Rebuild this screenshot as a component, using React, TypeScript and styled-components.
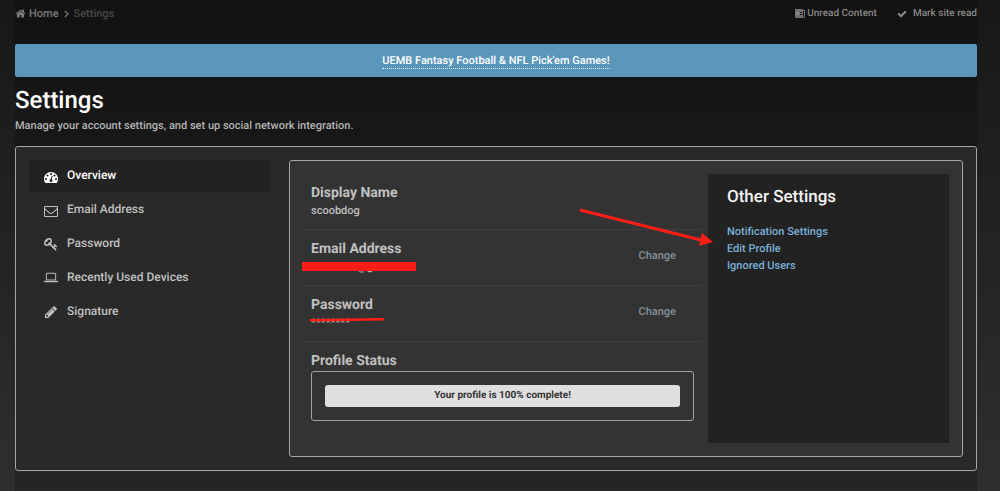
import React from "react";
import styled, { createGlobalStyle } from "styled-components";

const Global = createGlobalStyle`
  *, *::before, *::after { box-sizing: border-box; }
  html { min-height: 100%; }
  body {
    margin: 0;
    min-height: 100vh;
    background: linear-gradient(#181818, #2e2e2e);
    color: #c0c0c0;
    font: 500 11px/18px Roboto, "Liberation Sans", sans-serif;
    text-rendering: geometricPrecision;
  }
  a { color: inherit; text-decoration: none; }
  h1, h2, h3, p, ul, ol { margin: 0; padding: 0; font-weight: 500; list-style: none; }
`;

const Page = styled.div`
  min-height: 100vh;
  margin: 0 23px 0 15px;
  background: linear-gradient(#121212, #252525);
`;

const TopBar = styled.div`
  display: flex;
  justify-content: space-between;
  align-items: center;
  height: 44px;
  padding-bottom: 17px;
`;

const Crumbs = styled.ol`
  display: flex;
  align-items: center;
  gap: 5px;
  color: #7c7c7c;
`;

const Crumb = styled.li<{ $current?: boolean }>`
  display: flex;
  align-items: center;
  gap: 3px;
  color: ${(p) => (p.$current ? "#484848" : "#7c7c7c")};
`;

const TopLinks = styled.nav`
  display: flex;
  gap: 20px;
  color: #888;
  font-size: 10px;
`;

const TopLink = styled.a<{ $gap: number }>`
  display: flex;
  align-items: center;
  gap: ${(p) => p.$gap}px;
`;

const Svg = styled.svg<{ $w: number; $h: number }>`
  flex: none;
  width: ${(p) => p.$w}px;
  height: ${(p) => p.$h}px;
  fill: currentColor;
`;

const Banner = styled.div`
  display: flex;
  justify-content: center;
  align-items: center;
  height: 33px;
  border-radius: 2px;
  background: #5b96bb;
`;

const BannerLink = styled.a`
  border-bottom: 1px dotted #e4eff5;
  color: #fff;
  line-height: 15px;
`;

const Title = styled.h1`
  padding-top: 8px;
  color: #fff;
  font-size: 24px;
  line-height: 30px;
`;

const Intro = styled.p`
  padding: 2px 0 11px;
  color: #b4b4b4;
`;

const Box = styled.div`
  display: flex;
  gap: 19px;
  padding: 13px;
  border: 1px solid #a6a6a6;
  border-radius: 3px;
  background: #292929;
`;

const Menu = styled.nav`
  flex: 0 1 241px;
  display: grid;
  grid-auto-rows: 1fr;
  gap: 2px;
  height: 167px;
`;

const MenuItem = styled.a<{ $active?: boolean }>`
  display: flex;
  align-items: center;
  gap: 9px;
  padding: 0 15px 1px;
  font-size: 12px;
  color: ${(p) => (p.$active ? "#fff" : "#c0c0c0")};
  background: ${(p) => (p.$active ? "#222" : "transparent")};

  svg { margin-top: 3px; }
`;

const Panel = styled.main`
  flex: 1;
  display: flex;
  gap: 6px;
  padding: 13px;
  border: 1px solid #a6a6a6;
  border-radius: 3px;
  background: #333;
`;

const Fields = styled.div`
  flex: 1;
`;

const Field = styled.section`
  display: flex;
  justify-content: space-between;
  height: 56px;
  padding: 9px 26px 0 8px;
  border-bottom: 1px solid #404040;
`;

const FieldText = styled.div`
  position: relative;
`;

const FieldName = styled.h2`
  font-size: 14px;
  font-weight: 700;
  line-height: 20px;
`;

const Value = styled.p`
  line-height: 16px;
`;

const HiddenValue = styled(Value)`
  padding-left: 46px;
`;

const Redaction = styled.span`
  position: absolute;
  left: -9px;
  top: 23px;
  width: 114px;
  height: 9px;
  background: #ff1d17;
`;

const Strike = styled.svg`
  position: absolute;
  left: -1px;
  top: 22px;
  width: 75px;
  height: 5px;
`;

const ChangeLink = styled.a`
  align-self: center;
  padding-bottom: 13px;
  color: #84919b;
`;

const Status = styled.section`
  padding: 9px 8px 0;
`;

const StatusBox = styled.div`
  padding: 13px;
  border: 1px solid #a0a0a0;
  border-radius: 3px;
`;

const StatusBar = styled.div`
  border-radius: 3px;
  background: #dfdfdf;
  color: #333;
  font-size: 10px;
  font-weight: 700;
  line-height: 22px;
  text-align: center;
`;

const Other = styled.aside`
  position: relative;
  flex: 0 0 241px;
  min-height: 269px;
  padding: 11px 19px;
  background: #222;
`;

const OtherTitle = styled.h2`
  padding-bottom: 13px;
  color: #f4f4f4;
  font-size: 17px;
  line-height: 25px;
`;

const OtherLink = styled.a`
  display: block;
  color: #7bb0d6;
  line-height: 17px;
`;

const Arrow = styled.svg`
  position: absolute;
  left: -129px;
  top: 34px;
  width: 136px;
  height: 40px;
`;

const icons = {
  home: "M1472 992v480q0 26-19 45t-45 19h-384v-384h-256v384h-384q-26 0-45-19t-19-45v-480q0-1 .5-3t.5-3l575-474 575 474q1 2 1 6zm223-69l-62 74q-8 9-21 11h-3q-13 0-21-7l-692-577-692 577q-12 8-24 7-13-2-21-11l-62-74q-8-10-7-23.5t11-21.5l719-599q32-26 76-26t76 26l244 204v-195q0-14 9-23t23-9h192q14 0 23 9t9 23v408l219 182q10 8 11 21.5t-7 23.5z",
  check: "M1671 566q0 40-28 68l-724 724-136 136q-28 28-68 28t-68-28l-136-136-362-362q-28-28-28-68t28-68l136-136q28-28 68-28t68 28l294 295 656-657q28-28 68-28t68 28l136 136q28 28 28 68z",
  gauge: "M384 1152q0-53-37.5-90.5t-90.5-37.5-90.5 37.5-37.5 90.5 37.5 90.5 90.5 37.5 90.5-37.5 37.5-90.5zm192-448q0-53-37.5-90.5t-90.5-37.5-90.5 37.5-37.5 90.5 37.5 90.5 90.5 37.5 90.5-37.5 37.5-90.5zm428 481l101-382q6-26-7.5-48.5t-38.5-29.5-48 6.5-30 39.5l-101 382q-60 5-107 43.5t-63 98.5q-20 77 20 146t117 89 146-20 89-117q16-60-6-117t-72-91zm660-33q0-53-37.5-90.5t-90.5-37.5-90.5 37.5-37.5 90.5 37.5 90.5 90.5 37.5 90.5-37.5 37.5-90.5zm-640-640q0-53-37.5-90.5t-90.5-37.5-90.5 37.5-37.5 90.5 37.5 90.5 90.5 37.5 90.5-37.5 37.5-90.5zm448 192q0-53-37.5-90.5t-90.5-37.5-90.5 37.5-37.5 90.5 37.5 90.5 90.5 37.5 90.5-37.5 37.5-90.5zm320 448q0 261-141 483-19 29-54 29h-1402q-35 0-54-29-141-221-141-483 0-182 71-348t191-286 286-191 348-71 348 71 286 191 191 286 71 348z",
  mail: "M1664 1504v-768q-32 36-69 66-268 206-426 338-51 43-83 67t-86.5 48.5-102.5 24.5h-2q-48 0-102.5-24.5t-86.5-48.5-83-67q-158-132-426-338-37-30-69-66v768q0 13 9.5 22.5t22.5 9.5h1472q13 0 22.5-9.5t9.5-22.5zm0-1051v-24.5l-.5-13-3-12.5-5.5-9-9-7.5-14-2.5h-1472q-13 0-22.5 9.5t-9.5 22.5q0 168 147 284 193 152 401 317 6 5 35 29.5t46 37.5 44.5 31.5 50.5 27.5 43 9h2q20 0 43-9t50.5-27.5 44.5-31.5 46-37.5 35-29.5q208-165 401-317 54-43 100.5-115.5t46.5-131.5zm128-37v1088q0 66-47 113t-113 47h-1472q-66 0-113-47t-47-113v-1088q0-66 47-113t113-47h1472q66 0 113 47t47 113z",
  key: "M832 512q0-80-56-136t-136-56-136 56-56 136q0 42 19 83-41-19-83-19-80 0-136 56t-56 136 56 136 136 56 136-56 56-136q0-42-19-83 41 19 83 19 80 0 136-56t56-136zm851 704q0 17-49 66t-66 49q-9 0-28.5-16t-36.5-33-38.5-40-24.5-26l-96 96 220 220q28 28 28 68 0 42-39 81t-81 39q-40 0-68-28l-671-671q-176 131-365 131-163 0-265.5-102.5t-102.5-265.5q0-160 95-313t248-248 313-95q163 0 265.5 102.5t102.5 265.5q0 189-131 365l355 355 96-96q-3-3-26-24.5t-40-38.5-33-36.5-16-28.5q0-17 49-66t66-49q13 0 23 10 6 6 46 44.5t82 79.5 86.5 86 73 78 28.5 41z",
  laptop: "M416 1216q-66 0-113-47t-47-113v-704q0-66 47-113t113-47h1088q66 0 113 47t47 113v704q0 66-47 113t-113 47h-1088zm-32-864v704q0 13 9.5 22.5t22.5 9.5h1088q13 0 22.5-9.5t9.5-22.5v-704q0-13-9.5-22.5t-22.5-9.5h-1088q-13 0-22.5 9.5t-9.5 22.5zm1376 928h160v96q0 40-47 68t-113 28h-1600q-66 0-113-28t-47-68v-96h1760zm-720 96q16 0 16-16t-16-16h-160q-16 0-16 16t16 16h160z",
  pencil: "M491 1536l91-91-235-235-91 91v107h128v128h107zm523-928q0-22-22-22-10 0-17 7l-542 542q-7 7-7 17 0 22 22 22 10 0 17-7l542-542q7-7 7-17zm-54-192l416 416-832 832h-416v-416zm683 96q0 53-37 90l-166 166-416-416 166-165q36-38 90-38 53 0 91 38l235 234q37 39 37 91z",
};

function Icon({ name, w, h, box = 1792 }: { name: keyof typeof icons; w: number; h: number; box?: number }) {
  return (
    <Svg $w={w} $h={h} viewBox={`0 0 ${box} 1792`} aria-hidden="true">
      <path d={icons[name]} />
    </Svg>
  );
}

const menu: { label: string; icon: keyof typeof icons; box?: number; active?: boolean }[] = [
  { label: "Overview", icon: "gauge", active: true },
  { label: "Email Address", icon: "mail" },
  { label: "Password", icon: "key" },
  { label: "Recently Used Devices", icon: "laptop", box: 1920 },
  { label: "Signature", icon: "pencil" },
];

export default function App() {
  return (
    <>
      <Global />
      <Page>
        <TopBar>
          <Crumbs>
            <Crumb>
              <Icon name="home" w={11} h={11} />
              <a href="#home">Home</a>
            </Crumb>
            <Svg $w={5} $h={8} viewBox="0 0 5 8" aria-hidden="true">
              <path d="M1 1l3 3-3 3" fill="none" stroke="currentColor" strokeWidth="1.2" />
            </Svg>
            <Crumb $current>Settings</Crumb>
          </Crumbs>
          <TopLinks>
            <TopLink href="#unread" $gap={2}>
              <Svg $w={10} $h={9} viewBox="0 0 10 9" aria-hidden="true">
                <path fillRule="evenodd" opacity="0.8" d="M0 0h8v1h2v7l-1 1H1L0 8zM5 3v1h2V3zM5 5v1h2V5zM8 2v6h1V2z" />
                <path d="M1 3h3v3H1z" />
              </Svg>
              Unread Content
            </TopLink>
            <TopLink href="#read" $gap={6}>
              <Icon name="check" w={10} h={10} />
              Mark site read
            </TopLink>
          </TopLinks>
        </TopBar>
        <Banner>
          <BannerLink href="#games">UEMB Fantasy Football &amp; NFL Pick'em Games!</BannerLink>
        </Banner>
        <Title>Settings</Title>
        <Intro>Manage your account settings, and set up social network integration.</Intro>
        <Box>
          <Menu>
            {menu.map((m) => (
              <MenuItem key={m.label} href="#settings" $active={m.active}>
                <Icon name={m.icon} w={14} h={14} box={m.box} />
                {m.label}
              </MenuItem>
            ))}
          </Menu>
          <Panel>
            <Fields>
              <Field>
                <FieldText>
                  <FieldName>Display Name</FieldName>
                  <Value>scoobdog</Value>
                </FieldText>
              </Field>
              <Field>
                <FieldText>
                  <FieldName>Email Address</FieldName>
                  <HiddenValue>@g</HiddenValue>
                  <Redaction />
                </FieldText>
                <ChangeLink href="#email">Change</ChangeLink>
              </Field>
              <Field>
                <FieldText>
                  <FieldName>Password</FieldName>
                  <Value>********</Value>
                  <Strike viewBox="0 0 75 5" aria-hidden="true">
                    <path d="M0 3.2L74 2.2" stroke="#ff1d17" strokeWidth="2.6" />
                  </Strike>
                </FieldText>
                <ChangeLink href="#password">Change</ChangeLink>
              </Field>
              <Status>
                <FieldName>Profile Status</FieldName>
                <StatusBox>
                  <StatusBar>Your profile is 100% complete!</StatusBar>
                </StatusBox>
              </Status>
            </Fields>
            <Other>
              <OtherTitle>Other Settings</OtherTitle>
              <OtherLink href="#notifications">Notification Settings</OtherLink>
              <OtherLink href="#profile">Edit Profile</OtherLink>
              <OtherLink href="#ignored">Ignored Users</OtherLink>
              <Arrow viewBox="0 0 136 40" aria-hidden="true">
                <path d="M1 2L122 32" stroke="#ff1d17" strokeWidth="3" fill="none" />
                <path d="M134 34L120 38L123 25z" fill="#ff1d17" />
              </Arrow>
            </Other>
          </Panel>
        </Box>
      </Page>
    </>
  );
}
